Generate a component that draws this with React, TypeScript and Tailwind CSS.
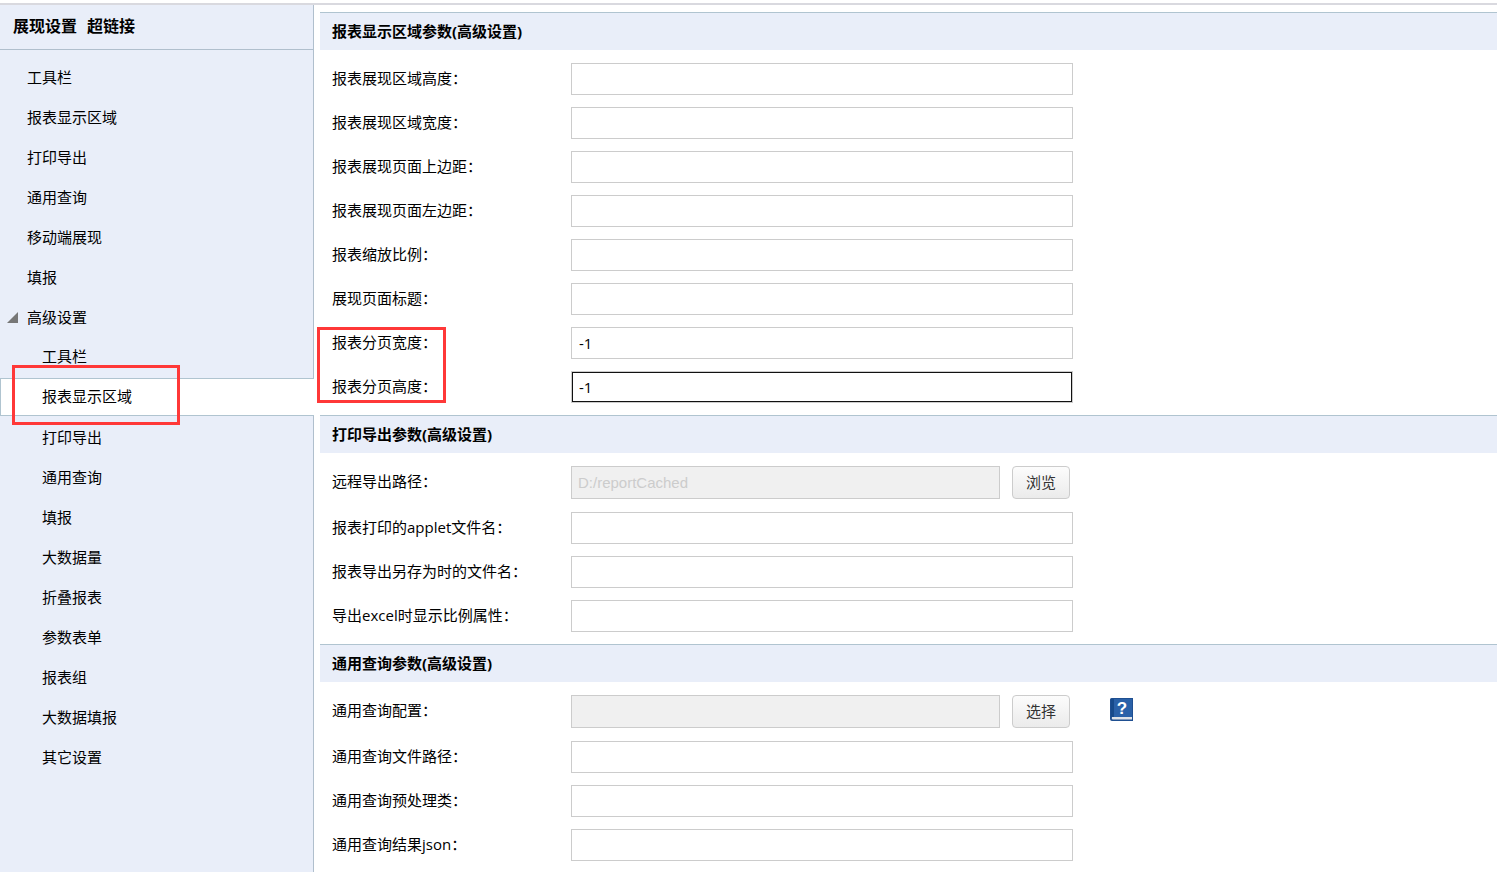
import React, { useState } from 'react'

type Addon = 'browse' | 'select'

interface Field {
  id: string
  label: string
  value?: string
  addon?: Addon
  focused?: boolean
}

interface Section {
  title: string
  fields: Field[]
  // Fields framed together by the red marker
  marked?: Field[]
}

const TOP_ITEMS = ['工具栏', '报表显示区域', '打印导出', '通用查询', '移动端展现', '填报']

const SUB_ITEMS = ['打印导出', '通用查询', '填报', '大数据量', '折叠报表', '参数表单', '报表组', '大数据填报', '其它设置']

const SECTIONS: Section[] = [
  {
    title: '报表显示区域参数(高级设置)',
    fields: [
      { id: 'area-height', label: '报表展现区域高度：' },
      { id: 'area-width', label: '报表展现区域宽度：' },
      { id: 'margin-top', label: '报表展现页面上边距：' },
      { id: 'margin-left', label: '报表展现页面左边距：' },
      { id: 'scale', label: '报表缩放比例：' },
      { id: 'page-title', label: '展现页面标题：' },
    ],
    marked: [
      { id: 'paging-width', label: '报表分页宽度：', value: '-1' },
      { id: 'paging-height', label: '报表分页高度：', value: '-1', focused: true },
    ],
  },
  {
    title: '打印导出参数(高级设置)',
    fields: [
      { id: 'export-path', label: '远程导出路径：', value: 'D:/reportCached', addon: 'browse' },
      { id: 'applet-name', label: '报表打印的applet文件名：' },
      { id: 'save-as-name', label: '报表导出另存为时的文件名：' },
      { id: 'excel-scale', label: '导出excel时显示比例属性：' },
    ],
  },
  {
    title: '通用查询参数(高级设置)',
    fields: [
      { id: 'query-config', label: '通用查询配置：', addon: 'select' },
      { id: 'query-path', label: '通用查询文件路径：' },
      { id: 'query-class', label: '通用查询预处理类：' },
      { id: 'query-json', label: '通用查询结果json：' },
    ],
  },
]

function HelpIcon() {
  return (
    <svg width="23" height="23" viewBox="0 0 23 23" aria-hidden="true">
      <path d="M1.5 0H23v23H2a2 2 0 0 1-2-2V1.5A1.5 1.5 0 0 1 1.5 0z" fill="#1f4f91" />
      <rect x="4" y="1" width="18" height="18" fill="#2a61a8" />
      <rect x="1" y="1" width="3" height="18" fill="#174a8b" />
      <path d="M2 19h20v2.5H2.5q-1.2-1-.5-2.5z" fill="#dfe3e8" />
      <text
        x="12"
        y="16"
        textAnchor="middle"
        fontSize="17"
        fontWeight="700"
        fontFamily="Liberation Sans, sans-serif"
        fill="#fff"
      >
        ?
      </text>
    </svg>
  )
}

function FieldRow({ field }: { field: Field }) {
  const [value, setValue] = useState(field.value ?? '')

  return (
    <div className={`flex items-center ${field.addon ? 'mb-[13px]' : 'mb-3'}`}>
      <label htmlFor={field.id} className="w-[239px] shrink-0 self-start leading-[30px]">
        {field.label}
      </label>
      {field.addon ? (
        <>
          <input
            id={field.id}
            type="text"
            disabled
            value={value}
            className="h-[33px] w-[429px] min-w-0 border border-[#ccc] bg-[#f0f0f0] px-[6px] font-['Liberation_Sans',sans-serif] text-[#ccc]"
          />
          <button
            type="button"
            className="ml-3 h-[33px] w-[58px] shrink-0 rounded border border-[#ccc] bg-linear-to-b from-[#fcfcfc] to-[#ebebeb] text-[#333]"
          >
            {field.addon === 'browse' ? '浏览' : '选择'}
          </button>
          {field.addon === 'select' && (
            <button type="button" aria-label="帮助" className="ml-10 h-[29px] shrink-0 self-start">
              <HelpIcon />
            </button>
          )}
        </>
      ) : (
        <input
          id={field.id}
          type="text"
          value={value}
          onChange={(e) => setValue(e.target.value)}
          className={`h-8 w-[502px] min-w-0 border border-[#ccc] bg-white px-[7px] ${
            field.focused ? 'outline outline-[#111] -outline-offset-2' : 'outline-none'
          }`}
        />
      )}
    </div>
  )
}

function SettingsSection({ section }: { section: Section }) {
  return (
    <section>
      <h2 className="h-[38px] border-t border-[#b0c4d0] bg-[#e9eef9] pl-3 font-bold leading-9">{section.title}</h2>
      <div className="pl-3 pt-[13px]">
        {section.fields.map((f) => (
          <FieldRow key={f.id} field={f} />
        ))}
        {section.marked && (
          <div className="relative">
            {section.marked.map((f) => (
              <FieldRow key={f.id} field={f} />
            ))}
            <div className="pointer-events-none absolute inset-y-0 -left-[15px] w-[129px] border-3 border-[#ff3838]" />
          </div>
        )}
      </div>
    </section>
  )
}

function Sidebar() {
  return (
    <aside className="w-[314px] shrink-0 border-r border-[#b0bfcd] bg-[#e9eef9]">
      <div className="flex h-[45px] items-center gap-[10px] border-b border-[#b0bfcd] pb-[2px] pl-[13px] text-base font-bold">
        <a href="#display">展现设置</a>
        <a href="#link">超链接</a>
      </div>
      <nav className="pt-[7px]">
        {TOP_ITEMS.map((item) => (
          <a key={item} href="#top" className="block pl-[27px] leading-10">
            {item}
          </a>
        ))}
        <button type="button" aria-expanded="true" className="flex h-[41px] w-full items-center pl-[7px]">
          <svg width="12" height="12" viewBox="0 0 12 12" className="mr-2" aria-hidden="true">
            <path d="M11 0v11H0z" fill="#777" />
          </svg>
          高级设置
        </button>
        <a href="#toolbar" className="mb-1 block pl-[42px] leading-9">
          工具栏
        </a>
        {/* Current page, open towards the content on the right */}
        <a
          href="#area"
          aria-current="page"
          className="relative -mr-px mb-px block border-y border-l border-[#b0c4d0] bg-white pb-[2px] pl-[41px] leading-[34px]"
        >
          报表显示区域
          <span className="pointer-events-none absolute -top-[14px] left-[11px] h-[60px] w-[168px] border-3 border-[#ff3838]" />
        </a>
        {SUB_ITEMS.map((item) => (
          <a key={item} href="#sub" className="block pl-[42px] leading-10">
            {item}
          </a>
        ))}
      </nav>
    </aside>
  )
}

export default function App() {
  return (
    <div className="flex min-h-screen flex-col bg-white pt-[3px] font-['Open_Sans','Noto_Sans_CJK_SC',sans-serif] text-[15px] text-black">
      <div className="h-[2px] bg-[#d9d9df]" />
      <div className="flex grow">
        <Sidebar />
        <main className="min-w-0 grow pl-[6px] pt-[7px]">
          {SECTIONS.map((s) => (
            <SettingsSection key={s.title} section={s} />
          ))}
        </main>
      </div>
    </div>
  )
}
